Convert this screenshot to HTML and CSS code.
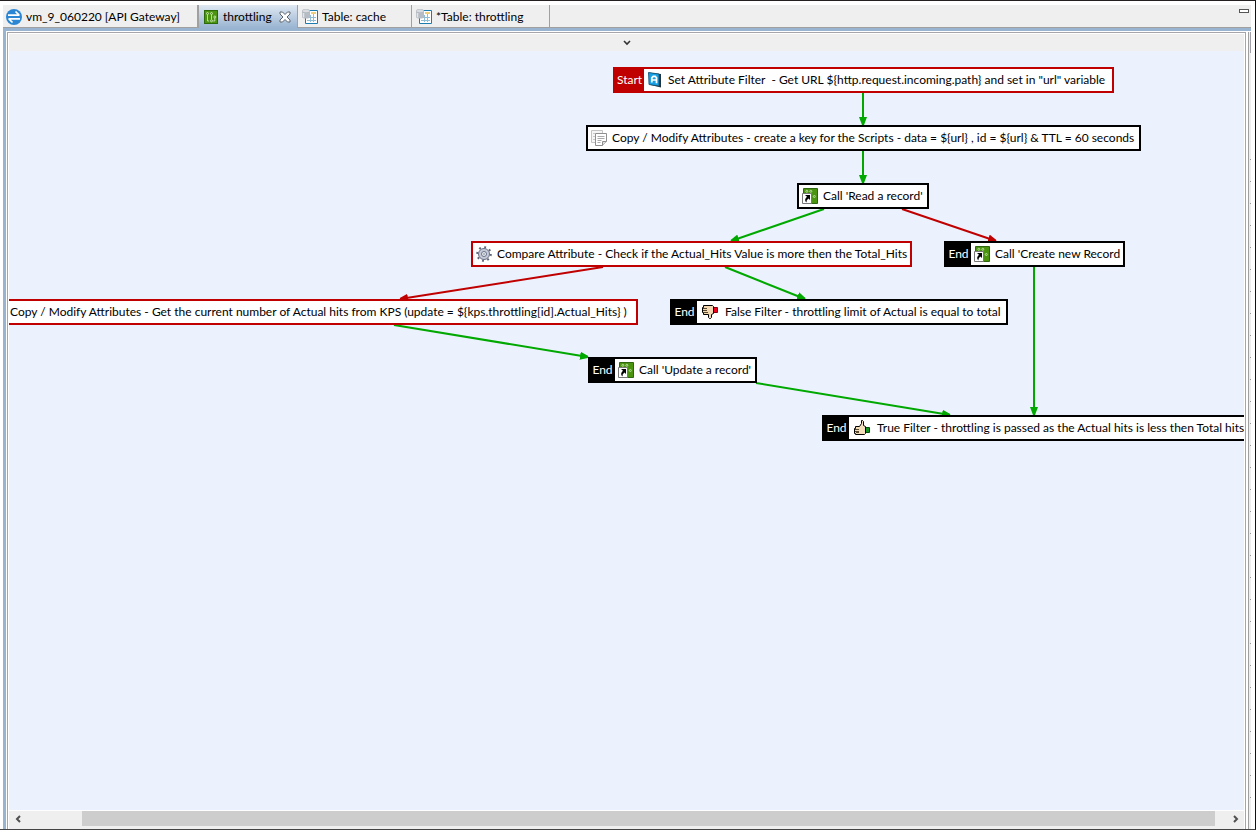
FILE: index.html
```
<!DOCTYPE html>
<html lang="en">
<head>
<meta charset="utf-8">
<title>Policy Studio - throttling</title>
<link rel="stylesheet" href="styles.css">
</head>
<body>
<svg class="defs" aria-hidden="true">
  <symbol id="i-gateway" viewBox="0 0 16 16">
    <circle cx="8" cy="8" r="8" fill="#2b87d3"/>
    <path d="M2 6.200h11.500M9.500 2.500l3.700 3.700M14 9.800H2.500M6.500 13.500L2.800 9.800" fill="none" stroke="#fff" stroke-width="1.700"/>
  </symbol>
  <symbol id="i-policy" viewBox="0 0 16 16">
    <rect x="1.500" y="1.500" width="13" height="13" fill="#4a9410" stroke="#2d6a0b"/>
    <g fill="none" stroke="#d6edc4" stroke-width=".8"><circle cx="4.500" cy="4.500" r="1"/><circle cx="8.500" cy="4.500" r="1"/><circle cx="11.800" cy="8" r="1"/><circle cx="8.500" cy="11.800" r="1"/><path d="M4.500 5.500v6.500h1.500M8.500 5.500v5M11.800 9v3h-1.500"/></g>
  </symbol>
  <symbol id="i-table" viewBox="0 0 16 16">
    <path d="M3.500 1.500h12v13h-12z" fill="#fff" stroke="#1b7cad"/>
    <path d="M9 4h5" stroke="#eac04c" stroke-width="1.500"/>
    <path d="M5 8.500h9M5 11.500h9M8.500 6v7M11.500 5v8" stroke="#8fbdd8" fill="none"/>
    <path d="M0 2v6c0 2 8 2 8 0V2z" fill="#b6bcc3"/><path d="M1.500 4v4.500" stroke="#e2e6ea" stroke-width="1.500"/>
    <ellipse cx="4" cy="2" rx="4" ry="1.700" fill="#d9dde1" stroke="#a5abb2" stroke-width=".5"/>
  </symbol>
  <symbol id="i-close" viewBox="0 0 12 12">
    <path d="M1 1h2.500L6 3.500 8.500 1H11v2L8 6l3 3v2H8.500L6 8.500 3.500 11H1V9l3-3-3-3z" fill="#fff" stroke="#5d6670"/>
  </symbol>
  <symbol id="i-attr" viewBox="0 0 16 16">
    <path d="M1.500.5l12.500 1.500v13.500L3.500 13z" fill="#23343f"/><path d="M1.500.5l10.500 1.500v12L2 12.500z" fill="#15a0e6" stroke="#17516f" stroke-width=".8"/>
    <path d="M4.800 10.500V5.800L6.200 4.300h2l1.300 1.500V11.200M4.800 8h4.500" fill="none" stroke="#fff" stroke-width="1.700"/>
  </symbol>
  <symbol id="i-copy" viewBox="0 0 16 16">
    <path d="M.5.5h11v12H.5z" fill="#f6f6f6" stroke="#c4c4c4"/><path d="M2 3.500h2M2 6.500h2M2 9.500h2" stroke="#c9c9c9"/>
    <path d="M4.500 3.500h11v8l-4 4h-7z" fill="#fff" stroke="#8f8f8f"/><path d="M11.500 15.500v-4h4" fill="#ddd" stroke="#8f8f8f"/>
    <path d="M6.500 6.500h7M6.500 8.500h7M6.500 10.500h4M6.500 12.500h3" stroke="#aaa"/>
  </symbol>
  <symbol id="i-call" viewBox="0 0 16 16">
    <path d="M1.500.5h14v15H8L1.500 7z" fill="#4a9410" stroke="#2f6610"/>
    <g fill="none" stroke="#cfe6bd" stroke-width=".8"><circle cx="4.800" cy="3.300" r="1"/><circle cx="8.800" cy="3.300" r="1"/><circle cx="12.300" cy="8.500" r="1"/></g>
    <path d="M.5 5.500h9v10h-9z" fill="#fff" stroke="#777"/>
    <path d="M3 7h5v5L6.500 10.500Q4 12 4.500 14.500 1.500 12 5 8.800z" fill="#000"/>
  </symbol>
  <symbol id="i-gear" viewBox="0 0 16 16">
    <circle cx="8" cy="8" r="6.800" fill="none" stroke="#5d6477" stroke-width="2" stroke-dasharray="1.900 3.440"/>
    <circle cx="8" cy="8" r="5.500" fill="#c5cad6" stroke="#687087"/><circle cx="8" cy="8" r="2.500" fill="#eef0f4" stroke="#69728a"/><circle cx="8" cy="8" r=".8" fill="#69728a"/>
  </symbol>
  <symbol id="i-down" viewBox="0 0 16 16">
    <path d="M11.500 3.500h4v5h-4z" fill="#f00020" stroke="#810010"/>
    <path d="M1.500 1.500h9l1 1v7l-2 1v3l-1 1h-1l-1-1v-3h-5v-2h-1v-5h1z" fill="#f3d8b1" stroke="#000"/>
    <path d="M1 4.500h4M1 6.500h4M2 8.500h4" fill="none" stroke="#4a3a24" stroke-width=".9"/>
  </symbol>
  <symbol id="i-up" viewBox="0 0 16 16">
    <path d="M11.500 7.500h4v5h-4z" fill="#15951f" stroke="#044d0a"/>
    <path d="M1.500 14.500h9l1-1v-7l-2-1v-4l-1-1h-1v3l-2 3h-4v2h-1v5h1z" fill="#f3deb9" stroke="#000"/>
    <path d="M1 11.500h4M1 9.500h4M2 12.500h3" fill="none" stroke="#4a3a24" stroke-width=".9"/>
  </symbol>
</svg>

<div class="window">
  <nav class="tabs" aria-label="Open editors">
    <div class="tab tab-gateway"><button type="button"><svg><use href="#i-gateway"/></svg>vm_9_060220 [API Gateway]</button></div>
    <div class="tab tab-active"><button type="button"><svg><use href="#i-policy"/></svg>throttling</button><button type="button" class="close" aria-label="Close throttling"><svg><use href="#i-close"/></svg></button></div>
    <div class="tab tab-cache"><button type="button"><svg><use href="#i-table"/></svg>Table: cache</button></div>
    <div class="tab tab-table"><button type="button"><svg><use href="#i-table"/></svg>*Table: throttling</button></div>
    <button type="button" class="minimize" aria-label="Minimize"></button>
  </nav>
  <div class="workspace">
    <main class="editor">
      <button type="button" class="palette-toggle" aria-label="Expand">
        <svg viewBox="0 0 8 6"><path d="M1 1l3 3 3-3" fill="none" stroke="#333" stroke-width="1.600"/></svg>
      </button>
      <section class="canvas" aria-label="throttling policy">
        <svg class="links" aria-hidden="true">
          <defs>
            <marker id="ok" markerUnits="userSpaceOnUse" markerWidth="9" markerHeight="8" refX="8" refY="4" orient="auto"><path d="M0 0l8 3v2l-8 3z" fill="#00a800"/></marker>
            <marker id="fail" markerUnits="userSpaceOnUse" markerWidth="9" markerHeight="8" refX="8" refY="4" orient="auto"><path d="M0 0l8 3v2l-8 3z" fill="#c00000"/></marker>
          </defs>
          <g transform="translate(-9 -51)">
            <g class="ok">
              <path d="M863 93V125"/><path d="M863 151V183"/><path d="M824 209L731 241"/><path d="M725 267L805 299"/>
              <path d="M394 325L588 357"/><path d="M756 383L950 415"/><path d="M1034 267V415"/>
            </g>
            <g class="fail"><path d="M902 209L996 241"/><path d="M603 267L400 299"/></g>
          </g>
        </svg>
        <div class="node red n-start"><b>Start</b><svg><use href="#i-attr"/></svg><span>Set Attribute Filter&nbsp; - Get URL ${http.request.incoming.path} and set in "url" variable</span></div>
        <div class="node n-key"><svg><use href="#i-copy"/></svg><span>Copy / Modify Attributes - create a key for the Scripts - data = ${url} , id = ${url} &amp; TTL = 60 seconds</span></div>
        <div class="node n-read"><svg><use href="#i-call"/></svg><span>Call 'Read a record'</span></div>
        <div class="node red n-compare"><svg><use href="#i-gear"/></svg><span>Compare Attribute - Check if the Actual_Hits Value is more then the Total_Hits</span></div>
        <div class="node n-create"><b>End</b><svg><use href="#i-call"/></svg><span>Call 'Create new Record</span></div>
        <div class="node red n-hits"><svg><use href="#i-copy"/></svg><span>Copy / Modify Attributes - Get the current number of Actual hits from KPS (update = ${kps.throttling[id].Actual_Hits} )</span></div>
        <div class="node thumb-node n-false"><b>End</b><svg><use href="#i-down"/></svg><span>False Filter - throttling limit of Actual is equal to total</span></div>
        <div class="node n-update"><b>End</b><svg><use href="#i-call"/></svg><span>Call 'Update a record'</span></div>
        <div class="node thumb-node n-true"><b>End</b><svg><use href="#i-up"/></svg><span>True Filter - throttling is passed as the Actual hits is less then Total hits</span></div>
      </section>
      <div class="scrollbar">
        <button type="button" aria-label="Scroll left"><svg viewBox="0 0 8 8"><path d="M6 1L3 4l3 3" fill="none" stroke="#505050" stroke-width="2"/></svg></button>
        <div class="track"><div class="thumb"></div></div>
        <button type="button" aria-label="Scroll right"><svg viewBox="0 0 8 8"><path d="M2 1l3 3-3 3" fill="none" stroke="#505050" stroke-width="2"/></svg></button>
      </div>
    </main>
    <div class="ruler"></div>
  </div>
</div>
</body>
</html>
```
FILE: styles.css
```
* { box-sizing: border-box; }
body {
  margin: 0;
  background: #fff;
  color: #000;
  font: 12px/16px Lato, "Open Sans", sans-serif;
}
button {
  margin: 0;
  padding: 0;
  border: 0;
  background: none;
  color: inherit;
  font: inherit;
}
.defs { position: absolute; width: 0; height: 0; }
.window {
  display: flex;
  flex-direction: column;
  height: 100vh;
  padding: 4px 4px 0 3px;
  border-top: 1px solid #231f20;
  border-right: 1px solid #111;
  border-bottom: 1px solid #444;
}
.tabs {
  display: flex;
  flex: none;
  height: 23px;
  background: #efefef;
  border-bottom: 1px solid #a0a0a0;
}
.tab {
  display: flex;
  align-items: center;
  height: 22px;
  padding: 1px 0 0 4px;
  border-right: 1px solid #a0a0a0;
  white-space: nowrap;
}
.tab button { display: flex; align-items: center; gap: 4px; }
.tab svg { width: 16px; height: 16px; flex: none; }
.tab-gateway { width: 195px; padding-left: 3px; }
.tab-active {
  width: 100px;
  height: 23px;
  justify-content: space-between;
  padding: 0 6px 0 4px;
  border-left: 1px solid #a0a0a0;
  background: linear-gradient(#dfe8f2, #99b4d1);
}
.tab .close svg { width: 12px; height: 12px; }
.tab-cache { width: 114px; }
.tab-table { width: 138px; }
.minimize {
  width: 10px;
  height: 4px;
  margin: 4px 2px 0 auto;
  border: 1px solid #555;
  background: #fff;
}
.workspace {
  display: flex;
  flex: 1;
  min-height: 0;
  border-top: 3px solid #99b4d1;
  border-left: 3px solid #99b4d1;
}
.editor {
  display: flex;
  flex: 1;
  flex-direction: column;
  min-width: 0;
  margin: 1px 2px 0 1px;
  padding: 1px 1px 0;
  border: solid #a5a5ab;
  border-width: 1px 1px 0;
}
.palette-toggle {
  display: flex;
  flex: none;
  align-items: center;
  justify-content: center;
  height: 17px;
  background: #efefef;
}
.palette-toggle svg { width: 8px; height: 6px; }
.canvas {
  position: relative;
  flex: 1;
  min-height: 0;
  overflow: hidden;
  background: #ebf2fe;
}
.links { position: absolute; top: 0; left: 0; width: 100%; height: 100%; }
.links path { stroke-width: 2; }
.links marker path { stroke: none; }
.ok { fill: none; stroke: #00a800; }
.ok path { marker-end: url(#ok); }
.fail { fill: none; stroke: #c00000; }
.fail path { marker-end: url(#fail); }
.node {
  position: absolute;
  display: flex;
  align-items: center;
  height: 26px;
  border: 2px solid #000;
  background: #fff;
  white-space: nowrap;
}
.node.red { border-color: #c00000; }
.node b {
  flex: none;
  align-self: stretch;
  width: 25px;
  background: #000;
  color: #fff;
  font-weight: 400;
  line-height: 22px;
  text-align: center;
}
.node.red b { width: 29px; background: #c00000; }
.node svg { flex: none; width: 16px; height: 16px; margin: 0 5px 0 3px; }
.node.thumb-node svg { margin: 0 7px 0 5px; }
.n-start { left: 604px; top: 16px; width: 501px; }
.n-key { left: 577px; top: 74px; width: 555px; }
.n-read { left: 788px; top: 132px; width: 132px; }
.n-compare { left: 462px; top: 190px; width: 441px; }
.n-create { left: 935px; top: 190px; width: 181px; }
.n-hits { left: -25px; top: 248px; width: 654px; }
.n-false { left: 661px; top: 248px; width: 338px; }
.n-update { left: 579px; top: 306px; width: 169px; }
.n-true { left: 813px; top: 364px; width: 448px; }
.scrollbar {
  display: flex;
  flex: none;
  height: 19px;
  border-top: 1px solid #fff;
  background: #efefef;
}
.scrollbar button { width: 17px; height: 16px; display: flex; align-items: center; justify-content: center; }
.scrollbar svg { width: 8px; height: 8px; }
.track { flex: 1; padding: 0 12px 0 56px; }
.thumb { height: 15px; background: #cdcdcd; }
.ruler {
  flex: none;
  width: 3px;
  margin-top: 1px;
  border-left: 1px solid #a0a0a0;
  background:
    linear-gradient(#a0a0a8, #a0a0a8) 1px 0 / 1px 21px no-repeat,
    repeating-linear-gradient(transparent 0 17px, #999 17px 18px, transparent 18px 22px) 1px 110px / 1px 660px no-repeat,
    #efefef;
}
```
